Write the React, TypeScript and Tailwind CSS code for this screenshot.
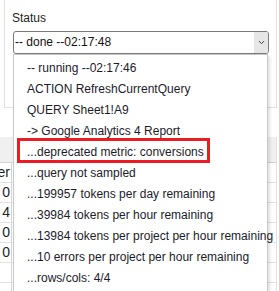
import { ChevronDown } from 'lucide-react';

const ITEMS = [
  '-- running --02:17:46',
  'ACTION RefreshCurrentQuery',
  'QUERY Sheet1!A9',
  '-> Google Analytics 4 Report',
  '...deprecated metric: conversions',
  '...query not sampled',
  '...199957 tokens per day remaining',
  '...39984 tokens per hour remaining',
  '...13984 tokens per project per hour remaining',
  '...10 errors per project per hour remaining',
  '...rows/cols: 4/4',
];

const ROWS = ['Server', '0', '4', '0', '0', '', ''];

export default function App() {
  return (
    <div className="relative w-[279px] h-[291px] overflow-hidden bg-white text-[12px] text-[#1e1e1e] font-['Segoe_UI','Liberation_Sans',sans-serif]">
      {/* Task pane header */}
      <div className="ml-[4px] w-[273px] h-[108px] border-l border-r border-b border-[#e1e1e1]">
        <div className="pl-[7px] pt-[10px] leading-[16px]">Status</div>
        <div className="ml-[8px] mt-[5px] w-[256px] h-[23px] flex items-stretch border border-[#7a7a7a] rounded-[3px] overflow-hidden">
          <div className="flex-1 pl-[1px] leading-[21px] text-[#111]">-- done --02:17:48</div>
          <div className="w-[14px] bg-[#e6e6e6] flex items-center justify-center">
            <ChevronDown size={9} strokeWidth={2.5} className="text-[#333]" />
          </div>
        </div>
      </div>

      {/* Grid behind the open list */}
      <div className="mt-[29px] w-[277px] border-r border-[#e1e1e1]">
        <div className="h-[26px] bg-[#f0f0f0] border-b border-[#d4d4d4]" />
        {ROWS.map((r, i) => (
          <div key={i} className="flex h-[20px] border-b border-[#e1e1e1]">
            <div className="w-[12px] border-r border-[#d4d4d4] overflow-hidden whitespace-nowrap leading-[19px] text-[14px] text-[#222] flex justify-end pr-[1px]">
              {r}
            </div>
          </div>
        ))}
      </div>

      {/* Open dropdown list */}
      <div className="absolute left-[13px] top-[54px] w-[255px] h-[250px] bg-white border border-[#c8c8c8] pt-[3px] shadow-[2px_2px_3px_rgba(0,0,0,0.12)]">
        {ITEMS.map((item) => (
          <div key={item} className="h-[21px] leading-[21px] pl-[13px] whitespace-nowrap text-[#1b1b2b]">
            {item}
          </div>
        ))}
      </div>

      {/* Highlight annotation */}
      <div className="absolute left-[17px] top-[138px] w-[193px] h-[25px] border-[3px] border-[#ed1c24]" />
    </div>
  );
}
